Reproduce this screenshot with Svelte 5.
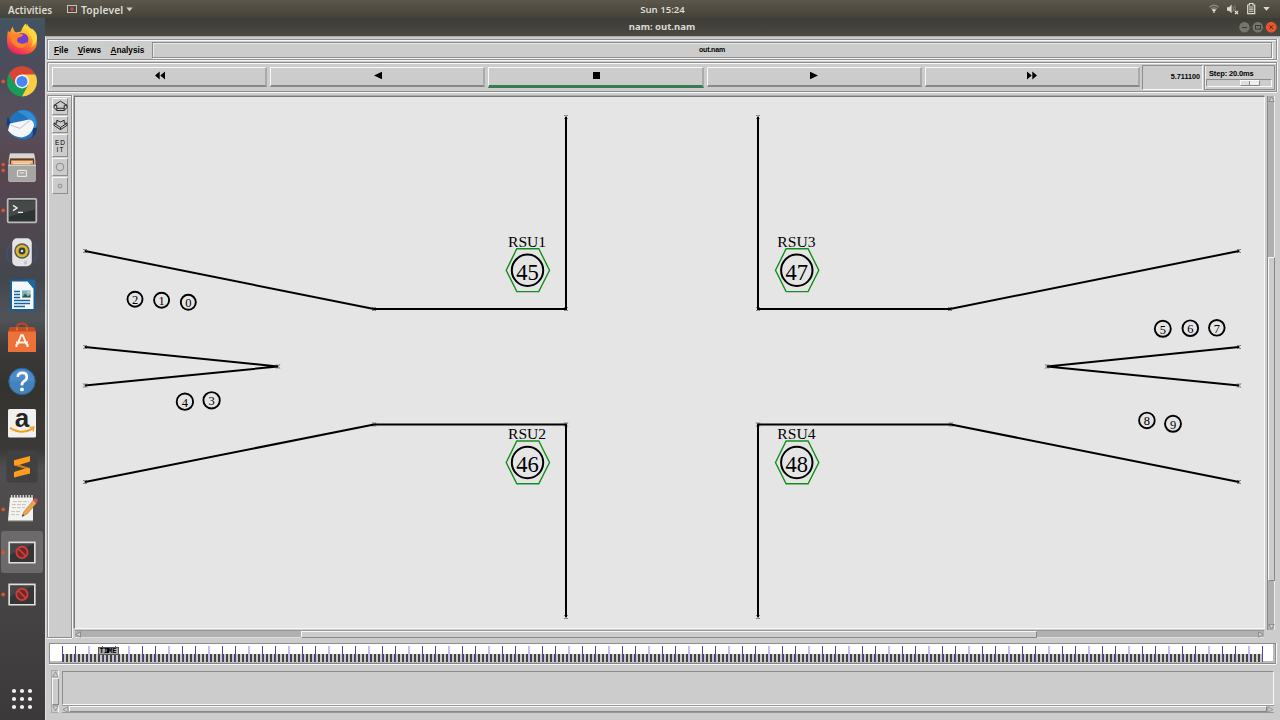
<script>
  const tools = [
    { glyph: 'rewind' }, { glyph: 'back' }, { glyph: 'stop' }, { glyph: 'play' }, { glyph: 'forward' }
  ];
  const dock = [
    ['firefox', 0], ['chrome', 1], ['mail', 0], ['files', 2], ['terminal', 1], ['music', 0], ['writer', 0],
    ['software', 0], ['help', 0], ['amazon', 0], ['sublime', 0], ['notes', 1], ['nam', 1, true], ['nam', 1]
  ];
  const roads = [
    '85,251 374,309 566,309 566,117',
    '1239,251 950,309 758,309 758,117',
    '85,347 278,366.5 85,385.5',
    '1239,347 1047,366.5 1239,385.5',
    '85,482 374,424.5 566,424.5 566,617',
    '1239,482 951,424.5 758,424.5 758,617'
  ];
  const marks = roads.flatMap((r) => r.split(' ').map((p) => p.split(',').map(Number)));
  const stations = [
    ['RSU1', 45, 527.5, 270.3], ['RSU3', 47, 796.8, 270.3], ['RSU2', 46, 527.5, 462.5], ['RSU4', 48, 796.8, 462.5]
  ];
  const cars = [
    [2, 135, 299.2, 7.5], [1, 161.6, 300.2, 7.5], [0, 188.3, 302.3, 7.5], [4, 184.9, 401.7, 8.2], [3, 211.6, 400.3, 8.2],
    [5, 1162.8, 328.8, 8], [6, 1190.3, 328.2, 7.8], [7, 1216.8, 327.8, 7.8], [8, 1146.9, 420.4, 7.8], [9, 1173, 423.8, 8]
  ];
  const bars = Array.from({ length: 300 }, (_, i) => `M${62 + i * 4} 654h2v8h-2z`).join('');
  const major = Array.from({ length: 31 }, (_, i) => 62 + i * 40);
  const dark = major.map((x) => `M${x} 646h1v16h-1z` + (x < 1262 ? `M${x + 13} 646h1v16h-1z` : '')).join('');
  const light = major.slice(0, 30).map((x) => `M${x + 26} 646h2v16h-2z`).join('');
</script>

<div class="screen">
  <header class="topbar">
    <span class="act">Activities</span>
    <svg class="appicon" width="10" height="8" viewBox="0 0 10 8"><rect x=".5" y=".5" width="9" height="7" fill="#4a4744" stroke="#c9c5bd" /><circle cx="5" cy="4" r="2" fill="#b94440" /></svg>
    <span class="top">Toplevel</span>
    <svg width="7" height="5" viewBox="0 0 7 5"><path d="M.3.5h6.4L3.5 4.5z" fill="#cfccc3" /></svg>
    <span class="clock">Sun 15:24</span>
    <svg class="status" width="66" height="16" viewBox="1208 1 66 16">
      <path d="M1209.5 7.2q4.5-4 9 0M1211 9q3-2.3 6 0" fill="none" stroke="#8a877f" stroke-width="1.4" />
      <path d="M1211.7 9.7q2.3-1.5 4.6 0l-1.7 1.7v1.5h-1.2v-1.5z" fill="#dedbd2" />
      <path d="M1227 7.2h2l2.6-2.6v8.6l-2.6-2.5h-2z" fill="#dedbd2" />
      <path d="M1232.7 6.5q1.5 2.5 0 5M1234.5 5.3q2 3.5 0 6" fill="none" stroke="#8a877f" />
      <path d="m1235 11 3 3m0-3-3 3" stroke="#dedbd2" stroke-width="1.2" />
      <path d="M1249.5 3.5h3.5v1.5h1.7v8.6h-7V5h1.8z" fill="none" stroke="#dedbd2" stroke-width="1.2" />
      <path d="M1249 7h4.5m-4.5 2.1h4.5m-4.5 2.1h4.5" stroke="#dedbd2" stroke-width="1.1" />
      <path d="M1263.3 7h6.4l-3.2 3.8z" fill="#dedbd2" />
    </svg>
  </header>

  <div class="body">
    <nav class="dock">
      {#each dock as [kind, dots, active]}
        <div class="slot" class:active>
          <svg viewBox="-22 -21.375 44 42.75" width="44" height="42.75">
            {#if dots === 1}
              <circle cx="-18.8" cy="0" r="1.9" fill="#d9552c" />
            {:else if dots === 2}
              <circle cx="-18.8" cy="-2.8" r="1.8" fill="#d9552c" /><circle cx="-18.8" cy="3" r="1.8" fill="#d9552c" />
            {/if}
            {#if kind === 'firefox'}
              <defs>
                <linearGradient id="ff" x1=".8" y1="0" x2=".3" y2="1"><stop offset="0" stop-color="#fff44a" /><stop offset=".35" stop-color="#ffb72b" /><stop offset=".65" stop-color="#ff6a31" /><stop offset="1" stop-color="#e91c68" /></linearGradient>
              </defs>
              <path d="M-14-9q1 2 2 2 1-4 3-6 0 4 3 6l5-1q2-6 5-8 1 5 5 8l1-3q5 6 5 12 0 14-15 14T-15 1q0-6 1-10z" fill="url(#ff)" />
              <circle cx="0" cy="0" r="6.4" fill="#7540c9" />
              <path d="M-11-7q4 3 8 1 4 0 4 2-2 2-5 2-3 5 3 6 4 1 6-2-1 8-9 6-9-3-7-15z" fill="#ff8429" />
              <path d="M5-16q-1 7 3 11 5 7 1 13 6-5 6-10 0-5-4-8Q6-12 5-16z" fill="#ffd63d" />
            {:else if kind === 'chrome'}
              <circle r="15" fill="#189d58" />
              <path d="M0 0-13-7.5A15 15 0 0 1 13-7.5z" fill="#da4437" />
              <path d="M0-7H13.3A15 15 0 0 1 0 15L6.2 3.5z" fill="#fccc43" />
              <path d="M-13-7.5-6.2 3.5 0 0v-7z" fill="#da4437" />
              <circle r="7" fill="#f6f5f3" /><circle r="5.5" fill="#4687f4" />
            {:else if kind === 'mail'}
              <path d="M-13-4Q-8-15 3-14.5q12 1.5 12 14T3 15q-10 0-16-7z" fill="#2372bd" />
              <path d="M-5-13q11-4 17 5 4 6 1 14Q10-7-5-13z" fill="#2f8ed6" />
              <path d="M-14-8q-2 6-1 10l4-3zM9 4q4 4 0 10 6-4 6-11z" fill="#143d83" />
              <path d="M-12-1 7-5q5 1 5 6-2 10-12 12-8 0-14-7z" fill="#f4f6fa" />
              <path d="M-11 1-2 4 8-4" fill="none" stroke="#bdc4cf" />
            {:else if kind === 'files'}
              <path d="M-12-14H12L13.5-7v20q0 1.5-1.5 1.5h-24q-1.5 0-1.5-1.5V-7z" fill="#aeaeab" />
              <path d="M-12-14H12L13-8h-26z" fill="#d5d5d1" /><path d="M-12-9h24v6h-24z" fill="#64371f" />
              <path d="M-11-7h22v4h-22z" fill="#e6a267" /><path d="M-10-5.5h20M-9-3.7H8" stroke="#f8e2bd" />
              <path d="M-14-2.5h28v16h-28z" fill="#a5a6a4" /><path d="M-14-2h28" stroke="#d5d5d1" />
              <rect x="-4.5" y="3" width="9" height="6" rx="1" fill="#a5a5a1" stroke="#e7e7e4" stroke-width="1.2" /><path d="M-2.5 5.5h5" stroke="#eee" />
            {:else if kind === 'terminal'}
              <rect x="-14.3" y="-11.5" width="28.6" height="23.4" rx="1" fill="#2d3234" stroke="#babdb7" stroke-width="1.8" />
              <path d="M-13-10h26v9l-26 7z" fill="#45494a" />
              <path d="m-9-5 4 2.6-4 2.7M-4 2h5" fill="none" stroke="#f0f1ee" stroke-width="1.4" />
            {:else if kind === 'music'}
              <path d="M-12-8q-6 8 0 18M12-8q6 8 0 18" fill="none" stroke="#315f8b" opacity=".45" stroke-width="2" />
              <rect x="-9.8" y="-14.2" width="19.6" height="28" rx="5" fill="#e4e4e4" />
              <circle cy="-1.4" r="7.7" fill="#55565a" /><circle cy="-1.4" r="6.3" fill="#d7b72f" /><circle cy="-1.4" r="3.4" fill="#333e46" /><circle cy="-1.4" r="1.3" fill="#ddd" />
              <path d="M5 8q-4 0-3 4h3" fill="#c7c7c7" />
            {:else if kind === 'writer'}
              <path d="M-11-15H6L12.5-7V14.6h-23.5z" fill="#f5f8fb" stroke="#155f94" stroke-width="2" stroke-linejoin="round" />
              <path d="M4-16h7q2.4 0 2.4 2.4V-6z" fill="#176aa5" />
              <path d="M-8-4h6m-6 3h6m-6 3h6m-6 3H8m-16 3H8m-16 3H3" stroke="#17659c" stroke-width="1.5" />
              <path d="M0-5h8.5v7H0z" fill="#72b4d8" /><path d="m0 2 3-4 3 3 2.5-2v3z" fill="#3e5737" /><circle cx="6.5" cy="-3" r="1.2" fill="#ffd13b" />
            {:else if kind === 'software'}
              <path d="M-5-8v-3q0-4 5-4t5 4v3" fill="none" stroke="#c0471d" stroke-width="2" />
              <path d="M-12-11h24l2 5v19.5h-28V-6z" fill="#ee713a" /><path d="M-12-11h24l2 4h-28z" fill="#c44b22" />
              <path d="M-5-8v-3M5-8v-3" stroke="#ed6d38" stroke-width="1.8" />
              <path d="M-4.5 6-.8-3.2h1.6L4.5 6M-6 4H6M-5.5 8.5v-3m11 3v-3" fill="none" stroke="#fff4e8" stroke-width="2" />
            {:else if kind === 'help'}
              <circle r="13.2" fill="#4482bd" stroke="#2c6398" /><path d="M-12-4q4-8 12-8t12 8v4h-24z" fill="#5391cc" opacity=".6" />
              <path d="M-4.3-4.5q.4-4 4.6-4 4.5 0 4.5 4 0 2.5-2.6 4.2T0 4" fill="none" stroke="#fff" stroke-width="2.7" /><circle cy="8" r="1.9" fill="#fff" />
            {:else if kind === 'amazon'}
              <rect x="-14" y="-14.5" width="28" height="28.5" rx="1.5" fill="#f1f1f0" />
              <text x="0" y="3.8" text-anchor="middle" class="amz">a</text>
              <path d="M-12 4.5Q0 12 11 5" fill="none" stroke="#f49c1c" stroke-width="2" /><path d="m7.5 4 4.5-.5-1 4.5" fill="none" stroke="#f49c1c" stroke-width="1.3" />
            {:else if kind === 'sublime'}
              <rect x="-15.5" y="-16" width="31" height="32" rx="3" fill="#414141" />
              <path d="M8-10.5V-5L-3-1.5 8 1.8V7L-8 11V5.6L3 2.2-8-1.2v-5z" fill="#ff9d1e" /><path d="m-8-1.2 5-.3L8 1.8 3 2.2z" fill="#d87b12" />
            {:else if kind === 'notes'}
              <g transform="translate(0 -1.8)">
                <path d="M-12-10h23v23h-25z" fill="#f3f2ed" /><path d="M-14 13.2h25" stroke="#b8b7b1" />
                <path d="M-11-11h22" stroke="#d8d8d4" stroke-width="3" stroke-dasharray="1.4 1.5" />
                <path d="M-9-6H7m-17 3H5m-15 3H3M-11 4h9m-9 3h8" stroke="#b7b7b7" stroke-width=".8" stroke-dasharray="4 1" />
                <path d="m0 9 2-5L11.5-7.5l3 3L5 6.5z" fill="#eda54c" stroke="#9b6430" stroke-width=".5" /><path d="m11-7 2-2.7q2 .3 3 2.5L14-4.5z" fill="#d35262" /><path d="m0 9 1-2.5 1.3 1.3z" fill="#333" />
              </g>
            {:else}
              <rect x="-12.8" y="-10" width="25.6" height="20.3" fill="#454545" stroke="#dfdfdc" stroke-width="1.7" />
              <path d="M-12 9.5V2l24-11v18.5z" fill="#353535" />
              <circle r="5.6" fill="#6b2a2a" stroke="#d03d39" stroke-width="1.9" /><path d="m-3.8-3.8 7.6 7.6" stroke="#d03d39" stroke-width="1.9" />
            {/if}
          </svg>
        </div>
      {/each}
      <svg class="grid" width="24" height="24" viewBox="-12 -12 24 24">
        {#each [-8, 0, 8] as x}{#each [-8, 0, 8] as y}<circle cx={x} cy={y} r="2.1" fill="#f3f3f2" />{/each}{/each}
      </svg>
    </nav>

    <section class="window">
      <div class="title">
        <span>nam: out.nam</span>
        <svg width="42" height="14" viewBox="1238 20 42 14">
          <circle cx="1244.4" cy="27.2" r="5.2" fill="#77746c" /><path d="M1242 27.5h5" stroke="#3d3b37" />
          <circle cx="1257.8" cy="27.2" r="5.2" fill="#77746c" /><rect x="1255.5" y="25.5" width="5" height="3.6" fill="none" stroke="#3d3b37" />
          <circle cx="1271.2" cy="27.2" r="5.4" fill="#e6582c" /><path d="m1269.4 25.4 3.6 3.6m0-3.6-3.6 3.6" stroke="#47261a" />
        </svg>
      </div>

      <div class="nam">
        <div class="menubar frame">
          <span><u>F</u>ile</span><span><u>V</u>iews</span><span><u>A</u>nalysis</span>
          <div class="filename">out.nam</div>
        </div>

        <div class="controls frame">
          <div class="buttons">
            {#each tools as t}
              <div class="btn" class:stop={t.glyph === 'stop'}>
                <svg width="12" height="9" viewBox="0 0 12 9">
                  {#if t.glyph === 'rewind'}<path d="M5.7.5v8L1 4.5zM11 .5v8L6.3 4.5z" />
                  {:else if t.glyph === 'back'}<path d="M10 .8v7.4L2 4.5z" />
                  {:else if t.glyph === 'stop'}<path d="M3 1h7v7h-7z" />
                  {:else if t.glyph === 'play'}<path d="M2 .8v7.4l8-3.7z" />
                  {:else}<path d="M1 .5v8l4.7-4zM6.3.5v8l4.7-4z" />{/if}
                </svg>
              </div>
            {/each}
          </div>
          <div class="time">5.711100</div>
          <div class="step"><span>Step: 20.0ms</span><div class="rail"><i></i></div></div>
        </div>

        <div class="main">
          <div class="side frame">
            <div class="tool h17"><svg width="15" height="13" viewBox="0 0 15 13"><path d="M7.5 1.2 14 5.3h-2.8v3H3.8v-3H1zM1 5.3v2.2l2.8 3h7.4v-2.2M14 5.3v2.2l-2.8 3M3.8 8.3v2.2" fill="none" stroke="#222" stroke-width=".95" /></svg></div>
            <div class="tool h17"><svg width="15" height="13" viewBox="0 0 15 13"><path d="M3.8 2.2 7.5 4l3.7-1.8v3H14L7.5 9.4 1 5.2h2.8zM1 5.2v2.2l6.5 4.2L14 7.4V5.2M7.5 9.4v2.2" fill="none" stroke="#222" stroke-width=".95" /></svg></div>
            <div class="tool h23 edit"><span>ED</span><span>IT</span></div>
            <div class="tool h18"><svg width="10" height="10" viewBox="0 0 10 10"><circle cx="5" cy="5" r="3.8" fill="none" stroke="#8c8c8c" /></svg></div>
            <div class="tool h17"><svg width="10" height="10" viewBox="0 0 10 10"><circle cx="5" cy="5" r="1.9" fill="none" stroke="#8c8c8c" /></svg></div>
          </div>
          <div class="view">
            <div class="canvas">
              <svg width="1188" height="531" viewBox="75 97 1188 531">
                {#each marks as [x, y]}
                  <path d="M{x - 2} {y - 2}l4 4m0-4-4 4M{x - 2} {y - 1.5}h4m-4 3h4" stroke="#777" stroke-width=".7" fill="none" />
                {/each}
                {#each roads as p}<polyline points={p} fill="none" stroke="#000" stroke-width="2" />{/each}
                {#each stations as [name, id, x, y]}
                  <text x={x - 0.4} y={y - 23.3} class="name">{name}</text>
                  <polygon points="{x - 21.3},{y} {x - 10.7},{y - 21.5} {x + 11.3},{y - 21.5} {x + 22},{y} {x + 11.3},{y + 21.3} {x - 10.7},{y + 21.3}" fill="none" stroke="#109018" stroke-width="1.4" />
                  <circle cx={x} cy={y} r="15.7" fill="none" stroke="#000" stroke-width="2" />
                  <text {x} y={y + 9.6} class="num">{id}</text>
                {/each}
                {#each cars as [id, x, y, r]}
                  <circle cx={x} cy={y} {r} fill="none" stroke="#000" stroke-width="1.9" />
                  <text {x} y={y + 4.9} class="car">{id}</text>
                {/each}
              </svg>
            </div>
            <div class="hscroll">
              <svg width="6" height="7" viewBox="0 0 6 7"><path d="M5.5.8v5.4L.8 3.5z" fill="#ccc" stroke="#828282" stroke-width=".8" /></svg>
              <div class="thumb wide"></div>
              <svg width="6" height="7" viewBox="0 0 6 7"><path d="M.5.8v5.4l4.7-2.7z" fill="#ccc" stroke="#828282" stroke-width=".8" /></svg>
            </div>
          </div>
          <div class="vscroll">
            <svg width="7" height="6" viewBox="0 0 7 6"><path d="M.8 5.5h5.4L3.5.8z" fill="#ccc" stroke="#828282" stroke-width=".8" /></svg>
            <div class="thumb tall"></div>
            <svg width="7" height="6" viewBox="0 0 7 6"><path d="M.8.5h5.4L3.5 5.2z" fill="#ccc" stroke="#828282" stroke-width=".8" /></svg>
          </div>
        </div>

        <div class="timeline">
          <svg width="1223" height="17" viewBox="51 645 1223 17" shape-rendering="crispEdges">
            <path d="M62 654h1200v8H62z" fill="#c8c8c8" />
            <path d={light} fill="#c2c0f5" />
            <path d={bars} fill="#454540" />
            <path d={dark} fill="#4a46b0" />
            <path d="M98 647h20v7H98z" fill="#aaa" stroke="#555" />
            <text x="108" y="653" class="marker">TIME</text><path d="M107.5 648v5" stroke="#000" stroke-width="2" />
          </svg>
        </div>

        <div class="notepad">
          <div class="vs">
            <svg width="7" height="7" viewBox="0 0 7 7"><path d="M.8 6h5.4L3.5.8z" fill="#ccc" stroke="#888" stroke-width=".8" /></svg>
            <div class="thumb full"></div>
            <svg width="7" height="7" viewBox="0 0 7 7"><path d="M.8.8h5.4L3.5 6z" fill="#ccc" stroke="#888" stroke-width=".8" /></svg>
          </div>
          <div class="padcol">
            <div class="pad"></div>
            <div class="hs">
              <svg width="7" height="7" viewBox="0 0 7 7"><path d="M6 .8v5.4L.8 3.5z" fill="#ccc" stroke="#888" stroke-width=".8" /></svg>
              <div class="thumb full"></div>
              <svg width="7" height="7" viewBox="0 0 7 7"><path d="M.8.8v5.4L6 3.5z" fill="#ccc" stroke="#888" stroke-width=".8" /></svg>
            </div>
          </div>
        </div>
      </div>
    </section>
  </div>
</div>

<style>
  :global(body) { margin: 0; overflow: hidden; }
  .screen, .screen * { box-sizing: border-box; }
  svg { display: block; flex: none; }
  .screen { width: 1280px; height: 720px; display: flex; flex-direction: column; background: #ccc; overflow: hidden; font-family: "Liberation Sans", sans-serif; }
  .topbar { height: 18px; flex: none; display: grid; grid-template-columns: 59px 14px 45px 1fr 66px; align-items: center; padding: 0 6px 0 8px; background: linear-gradient(#5b574c, #454239); color: #dfdbd2; font: 600 9.6px/18px "Noto Sans", sans-serif; position: relative; }
  .topbar span { padding-top: 1px; height: 18px; }
  .topbar .status { grid-column: 5; }
  .clock { position: absolute; left: 602px; top: 0; width: 121px; text-align: center; }
  .act { font-size: 9.9px; }
  .top { font-size: 10.3px; letter-spacing: .15px; }
  .body { display: flex; height: 702px; }
  .dock { width: 45px; flex: none; display: flex; flex-direction: column; background: linear-gradient(#435462 0, #4c4c5b 45px, #57505b 100px, #584650 150px, #4c4750 230px, #44464e 260px, #505459 300px, #3c3a3a 330px, #35332f 370px, #3a3937 430px, #504e4f 450px, #484646 550px, #3b393a 702px); }
  .slot { height: 42.75px; flex: none; width: 44px; }
  .slot:first-child { margin-top: -.5px; }
  .slot svg { overflow: visible; }
  .slot.active { background: #6c6a6b; border-radius: 3px; margin-left: 1px; width: 42px; }
  .slot.active svg { margin-left: -1px; }
  .grid { margin: auto 0 9px 10px; }
  .amz { font: 700 26px "Liberation Sans", sans-serif; fill: #252525; }
  .window { width: 1235px; display: flex; flex-direction: column; }
  .title { height: 18px; flex: none; display: grid; grid-template-columns: 1193px 42px; align-items: center; background: linear-gradient(#3d3b36, #4c4a43); color: #dfdbd2; font: 700 9.5px/18px "Noto Sans", sans-serif; }
  .title span { padding-left: 41px; text-align: center; }
  .nam { flex: 1; background: #ccc; border-top: 1px solid #aaa; border-left: 1px solid #e1e1e1; padding: 2px 3px 0 1px; display: flex; flex-direction: column; color: #000; font-weight: 700; }
  .frame { border: 1px solid #8d8d8d; box-shadow: inset 1px 1px #f8f8f8, 0 1px #f8f8f8, 1px 0 #f8f8f8; }
  .menubar { height: 21px; flex: none; display: flex; align-items: center; padding-left: 6px; font-size: 8.25px; }
  .menubar span { margin-right: 9.5px; padding-top: 2px; }
  .menubar u { text-decoration-thickness: 1px; text-underline-offset: 1px; }
  .filename { flex: 1; margin: 0 4px 0 -2px; height: 16px; border: 1px solid #8d8d8d; box-shadow: inset 1px 1px #e9e9e9, 1px 1px #f8f8f8; text-align: center; font-size: 7px; line-height: 14px; letter-spacing: -.15px; }
  .controls { height: 30px; flex: none; margin-top: 2px; padding: 2px 1px 2px 4px; display: grid; grid-template-columns: 1090px 61px 1fr; }
  .buttons { display: grid; grid-template-columns: repeat(5, 1fr); column-gap: 3px; padding: 2px 2px 2px 0; }
  .btn { display: flex; align-items: center; justify-content: center; height: 20px; border: 1px solid #f8f8f8; border-right: 2px solid #aaa; border-bottom: 2px solid #888; padding: 0 0 2px 1px; }
  .btn.stop { border-bottom: 3px solid #377b55; height: 21px; }
  .time { border: 1px solid #8d8d8d; border-right-color: #f8f8f8; border-bottom-color: #f8f8f8; text-align: right; font-size: 7.2px; line-height: 22px; height: 25px; padding-right: 2px; }
  .step { border: 1px solid #8d8d8d; height: 25px; margin-left: 1px; padding: 2px 2px 0 1px; font-size: 7.5px; line-height: 11px; box-shadow: inset 1px 0 #eee; }
  .step span { padding-left: 3px; display: block; letter-spacing: -.15px; }
  .rail { height: 8px; border: 1px solid #8d8d8d; border-right-color: #f8f8f8; border-bottom-color: #f8f8f8; }
  .rail i { display: block; width: 20px; height: 6px; margin-left: 33px; border: 1px solid #fafafa; border-bottom-color: #888; border-right-color: #888; background: linear-gradient(90deg, #ddd 8px, #888 8px 9px, #eee 9px); }
  .main { height: 543px; flex: none; margin-top: 3px; display: flex; }
  .side { width: 25px; padding: 2px 2px 0 4px; display: flex; flex-direction: column; gap: 1px; }
  .tool { width: 16px; flex: none; display: flex; align-items: center; justify-content: center; border: 1px solid #f8f8f8; border-right-color: #8d8d8d; border-bottom-color: #8d8d8d; }
  .h17 { height: 17px; }
  .h18 { height: 18px; }
  .h23 { height: 23px; }
  .edit { flex-direction: column; font: 400 6.5px/7px "Liberation Sans", sans-serif; }
  .edit span { letter-spacing: 1px; padding-left: 1px; }
  .view { margin: 1px 0 0 2px; width: 1191px; }
  .canvas { height: 533px; background: #e5e5e5; border: 1px solid #777; border-right: 1px solid #f8f8f8; border-bottom: 1px solid #f8f8f8; overflow: hidden; box-shadow: -1px -1px #aaa; }
  .name { font: 15.6px "Liberation Serif", serif; text-anchor: middle; }
  .num { font: 22.5px "Liberation Serif", serif; text-anchor: middle; }
  .car { font: 12.5px "Liberation Serif", serif; text-anchor: middle; }
  .hscroll { height: 8px; display: flex; align-items: center; background: #b0b0b0; margin: 1px 1px 0; border-top: 1px solid #999; border-bottom: 1px solid #ddd; }
  .thumb { background: #ccc; border: 1px solid #f8f8f8; border-right-color: #888; border-bottom-color: #888; }
  .thumb.wide { width: 736px; height: 7px; margin: 0 auto 0 220px; }
  .vscroll { width: 8px; height: 534px; margin: 1px 0 0 2px; display: flex; flex-direction: column; align-items: center; background: #b0b0b0; border-left: 1px solid #888; border-right: 1px solid #eee; }
  .thumb.tall { height: 324px; width: 7px; margin: 155px 0 auto; }
  .timeline { height: 21px; flex: none; margin: 5px 0 0 2px; width: 1227px; border: 1px solid #8d8d8d; padding: 1px; background: #fff; border-bottom-color: #888; box-shadow: inset 0 -2px #bbb, inset -2px 0 #bbb, 0 1px #f8f8f8, 1px 0 #f8f8f8; }
  .marker { font: 700 7px "Liberation Mono", monospace; text-anchor: middle; }
  .notepad { height: 43px; flex: none; margin: 6px 3px 0 4px; display: flex; gap: 3px; }
  .vs { width: 8px; display: flex; flex-direction: column; align-items: center; border: 1px solid #aaa; border-right-color: #f8f8f8; }
  .vs .full { flex: 1; width: 7px; }
  .padcol { flex: 1; display: flex; flex-direction: column; }
  .pad { flex: 1; border: 1px solid #8d8d8d; border-right-color: #f8f8f8; border-bottom-color: #f8f8f8; margin-top: 1px; }
  .hs { height: 8px; display: flex; align-items: center; border-top: 1px solid #999; border-bottom: 1px solid #999; }
  .hs .full { flex: 1; height: 6px; }
</style>
